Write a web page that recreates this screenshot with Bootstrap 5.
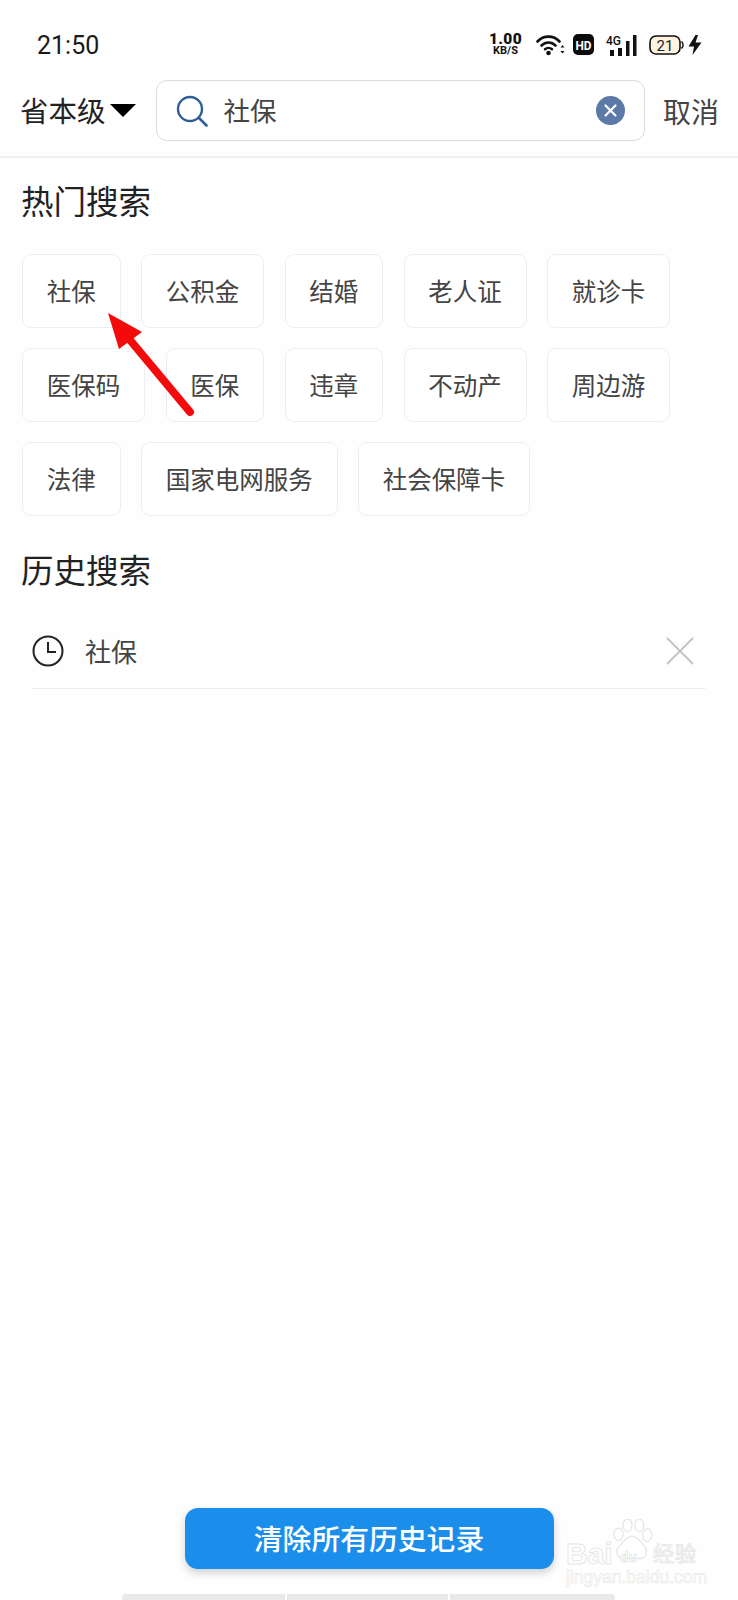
<!DOCTYPE html>
<html lang="zh-CN">
<head>
<meta charset="utf-8">
<title>搜索</title>
<link href="https://cdn.jsdelivr.net/npm/bootstrap@5.3.0/dist/css/bootstrap.min.css" rel="stylesheet">
<style>
html,body{margin:0;background:#fff}
body{font-family:"Noto Sans CJK SC","Liberation Sans",sans-serif;color:#333;overflow:hidden}
.shell{position:relative;width:738px;height:1600px;background:#fefefe;overflow:hidden}
.status-row{height:80px;padding:0 36px 0 37px}
.clock{font-family:Roboto,sans-serif;font-size:25px;line-height:1;color:#1a1a1a;margin-top:10px}
.status-icons{margin-top:9px;gap:0}
.speed{font-family:Roboto,sans-serif;font-weight:700;color:#111;text-align:center;width:33px;margin-right:14px;line-height:1}
.speed b{display:block;font-size:15.5px;line-height:12px;letter-spacing:.3px}
.speed i{display:block;font-style:normal;font-size:11px;line-height:11px}
.head-row{padding:0 19px 0 20px;height:61px;margin-bottom:15px}
.region{font-size:28.5px;line-height:1;color:#222;white-space:nowrap}
.region-caret{width:0;height:0;border-left:13px solid transparent;border-right:13px solid transparent;border-top:13px solid #000;margin:0 20px 0 4px}
.search-box{flex:1;height:61px;border:1.5px solid #dcdcdc;border-radius:11px;padding:0 19px;background:#fff}
.search-val{font-size:26.5px;color:#444;line-height:1;margin-left:16px}
.cancel{font-size:28px;color:#444;margin-left:18px;line-height:1;white-space:nowrap}
.rule{height:2px;background:#f0f0f0;margin:0}
.sect-title{font-size:32.5px;line-height:1;color:#222;margin:0;font-weight:400;padding-left:21px}
.hot-title{margin-top:26px}
.chips{padding:0 22px;margin-top:37.5px;gap:20px 20.5px;width:700px}
.chip{height:74px;border:1px solid #eceff0;border-radius:9px;padding:0 23.75px;font-size:24.5px;color:#444;background:#fff;white-space:nowrap}
.hist-title{margin-top:37px}
.hist-row{margin:0 32px;height:76px;margin-top:27.5px;border-bottom:1.5px solid #f0f0f0}
.hist-text{font-size:26px;color:#444;line-height:1;margin-left:21px}
.close-gap{width:12px}
.clear-btn{margin:0 auto 0;width:369px;height:61px;border-radius:13px;background:#1a8eea;color:#fff;border:0;font-size:28.8px;font-weight:500;line-height:1;box-shadow:0 4px 8px rgba(0,0,0,.18)}
.clear-wrap{margin-top:auto;padding-bottom:25px}
.nav-strip{height:6px;padding-left:122px;gap:2px}
.nav-strip span{height:6px;background:#e9e9e9;display:block}
.nav-strip span:nth-child(1){width:163px;border-radius:4px 0 0 0}
.nav-strip span:nth-child(2){width:161px}
.nav-strip span:nth-child(3){width:165px;border-radius:0 4px 0 0}
.arrow-mark{position:absolute;left:100px;top:305px;width:100px;height:115px}
.wm{position:absolute;left:566px;top:1518px;width:140px;height:72px;pointer-events:none}
.wm-bai{position:absolute;left:0;top:22px;font:700 30px/28px "Liberation Sans",sans-serif;color:#fff;-webkit-text-stroke:1px #e8e8e8}
.wm-du{position:absolute;left:54px;top:32px;font:700 14px/14px "Liberation Sans",sans-serif;color:#fff;-webkit-text-stroke:.6px #e2e2e2}
.wm-cn{position:absolute;left:87px;top:24px;font-size:21px;line-height:1;color:#fff;-webkit-text-stroke:1px #e8e8e8;white-space:nowrap;letter-spacing:1px}
.wm-url{position:absolute;left:0;top:51px;font:400 17.5px/1 "Liberation Sans",sans-serif;color:#fff;-webkit-text-stroke:.6px #e8e8e8;white-space:nowrap}
.wm-paw{position:absolute;left:45px;top:1px;width:42px;height:45px}
.net-mark{margin-left:12px;margin-right:12px}
</style>
</head>
<body>
<div class="shell d-flex flex-column">
  <div class="status-row d-flex justify-content-between align-items-center">
    <div class="clock">21:50</div>
    <div class="status-icons d-flex align-items-center">
      <div class="speed"><b>1.00</b><i>KB/S</i></div>
      <svg width="29" height="22" viewBox="0 0 29 22" class="me-2">
        <g fill="none" stroke="#111" stroke-width="2.6" stroke-linecap="round">
          <path d="M1.5 7.5C7.5 1 17.5 1 23.5 7.5"/><path d="M5.5 11.5C9.5 7.5 15.5 7.5 19.5 11.5"/><path d="M9 15.2C11 13.5 14 13.5 16 15.2"/>
        </g>
        <circle cx="12.5" cy="19" r="2.3" fill="#111"/>
        <path d="M24.5 13.5l2-2.5 2 2.5zM24.5 17l2 2.5 2-2.5z" fill="#111"/>
      </svg>
      <svg width="21" height="21" viewBox="0 0 21 21">
        <rect width="21" height="21" rx="5" fill="#0c0c0c"/>
        <text x="10.5" y="15.5" text-anchor="middle" font-family="Roboto,sans-serif" font-size="13.5" font-weight="700" fill="#fff" textLength="16" lengthAdjust="spacingAndGlyphs">HD</text>
      </svg>
      <svg width="31" height="22" viewBox="0 0 31 22" class="net-mark">
        <rect x="4" y="16" width="4" height="6" fill="#111"/><rect x="12" y="14" width="4" height="8" fill="#111"/><rect x="20" y="7" width="3.5" height="15" fill="#111"/><rect x="27" y="1" width="3.5" height="21" fill="#111"/>
        <text x="0" y="11" font-family="Roboto,sans-serif" font-size="12" font-weight="500" fill="#111" textLength="15">4G</text>
      </svg>
      <svg width="35" height="20" viewBox="0 0 35 20" class="me-1">
        <rect x="1" y="1" width="30" height="18" rx="6" fill="#fdf3e0" stroke="#111" stroke-width="1.6"/>
        <path d="M32.5 6.5c2 2 2 5 0 7" fill="none" stroke="#111" stroke-width="1.6"/>
        <text x="16" y="15.5" text-anchor="middle" font-family="Roboto,sans-serif" font-size="15" fill="#222">21</text>
      </svg>
      <svg width="14" height="20" viewBox="0 0 14 20"><path d="M7.5 0L0.5 11.5H6L4.5 20L13.5 7.5H7.5L10 0z" fill="#111"/></svg>
    </div>
  </div>

  <div class="head-row d-flex align-items-center">
    <span class="region">省本级</span>
    <span class="region-caret"></span>
    <div class="search-box d-flex align-items-center">
      <svg width="32" height="32" viewBox="0 0 32 32"><circle cx="14" cy="14" r="12" fill="none" stroke="#2f5d95" stroke-width="2.4"/><path d="M23 23l7.5 7.5" stroke="#2f5d95" stroke-width="2.6" stroke-linecap="round"/></svg>
      <span class="search-val flex-grow-1">社保</span>
      <svg width="29" height="29" viewBox="0 0 29 29"><circle cx="14.5" cy="14.5" r="14.5" fill="#5b7aa8"/><path d="M9.5 9.5l10 10M19.5 9.5l-10 10" stroke="#fff" stroke-width="2.2" stroke-linecap="round"/></svg>
    </div>
    <span class="cancel">取消</span>
  </div>
  <div class="rule"></div>

  <h2 class="sect-title hot-title">热门搜索</h2>
  <div class="chips d-flex flex-wrap">
    <div class="chip d-flex align-items-center">社保</div>
    <div class="chip d-flex align-items-center">公积金</div>
    <div class="chip d-flex align-items-center">结婚</div>
    <div class="chip d-flex align-items-center">老人证</div>
    <div class="chip d-flex align-items-center">就诊卡</div>
    <div class="chip d-flex align-items-center">医保码</div>
    <div class="chip d-flex align-items-center">医保</div>
    <div class="chip d-flex align-items-center">违章</div>
    <div class="chip d-flex align-items-center">不动产</div>
    <div class="chip d-flex align-items-center">周边游</div>
    <div class="chip d-flex align-items-center">法律</div>
    <div class="chip d-flex align-items-center">国家电网服务</div>
    <div class="chip d-flex align-items-center">社会保障卡</div>
  </div>

  <h2 class="sect-title hist-title">历史搜索</h2>
  <div class="hist-row d-flex align-items-center">
    <svg width="32" height="32" viewBox="0 0 32 32"><circle cx="16" cy="16" r="14.5" fill="none" stroke="#222" stroke-width="2"/><path d="M16 7v10h8" fill="none" stroke="#222" stroke-width="2"/></svg>
    <span class="hist-text flex-grow-1">社保</span>
    <svg width="28" height="28" viewBox="0 0 28 28"><path d="M1 1l26 26M27 1L1 27" stroke="#c4c4c4" stroke-width="2"/></svg>
    <span class="close-gap"></span>
  </div>

  <div class="clear-wrap d-flex">
    <button type="button" class="btn clear-btn">清除所有历史记录</button>
  </div>
  <div class="nav-strip d-flex"><span></span><span></span><span></span></div>

  <svg class="arrow-mark" viewBox="0 0 100 115" aria-hidden="true">
    <path d="M8 8L42 27L19 44z" fill="#f40a0a"/>
    <path d="M30 35L90 107" stroke="#f40a0a" stroke-width="8" stroke-linecap="round"/>
  </svg>

  <div class="wm" aria-hidden="true">
    <svg class="wm-paw" viewBox="0 0 46 50">
      <g fill="#fff" stroke="#e4e4e4" stroke-width="1.3">
        <ellipse cx="8" cy="17" rx="5" ry="7"/><ellipse cx="18" cy="7" rx="5" ry="7"/><ellipse cx="31" cy="7" rx="5" ry="7"/><ellipse cx="40" cy="18" rx="5" ry="7"/>
        <path d="M23 19c6 0 9 6 13 10 5 5 4 15-5 15-3 0-5-1-8-1s-6 1-9 1C5 44 4 34 10 29c4-4 7-10 13-10z"/>
      </g>
    </svg>
    <span class="wm-bai">Bai</span><span class="wm-du">du</span><span class="wm-cn">经验</span>
    <span class="wm-url">jingyan.baidu.com</span>
  </div>
</div>
<script src="https://cdn.jsdelivr.net/npm/bootstrap@5.3.0/dist/js/bootstrap.bundle.min.js"></script>
</body>
</html>
